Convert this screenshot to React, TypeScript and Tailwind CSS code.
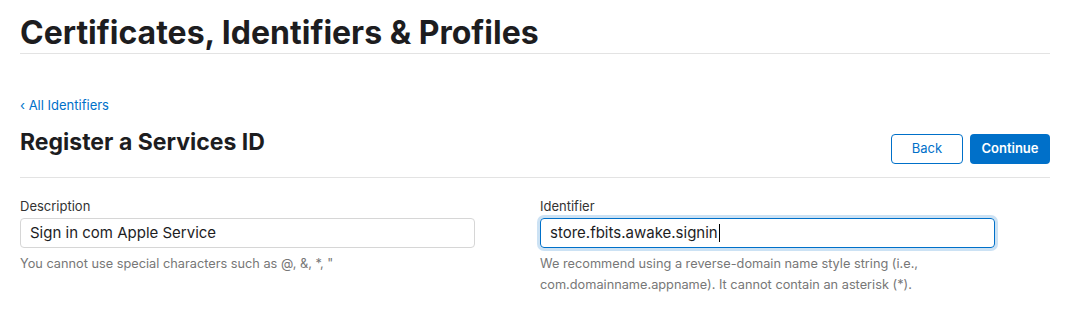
export default function App() {
  return (
    <div className="min-h-screen bg-white px-5 font-['Inter',sans-serif] text-[#1d1d1f]">
      <div className="w-[1030px]">
        <div className="pt-[14px] pb-[1px] border-b border-[#e3e3e3]">
          <h1 className="text-[32px] leading-[38px] font-bold">
            Certificates, Identifiers &amp; Profiles
          </h1>
        </div>

        <div className="pt-[38px]">
          <a href="#" className="text-[13px] leading-[18px] text-[#0070c9]">
            ‹ All Identifiers
          </a>
        </div>

        <div className="flex items-start justify-between pt-[12px] pb-[13px] border-b border-[#e3e3e3]">
          <h2 className="text-[23px] leading-[28px] font-bold">
            Register a Services ID
          </h2>
          <div className="flex gap-[7px] mt-[6px]">
            <button className="w-[72px] h-[30px] rounded-[4px] border border-[#0070c9] text-[13px] text-[#0070c9]">
              Back
            </button>
            <button className="w-[80px] h-[30px] rounded-[4px] bg-[#0070c9] text-[13px] font-semibold text-white">
              Continue
            </button>
          </div>
        </div>

        <div className="grid grid-cols-[455px_455px] gap-x-[65px] pt-[19px]">
          <div>
            <label className="block text-[13px] leading-[18px] text-[#333]">Description</label>
            <div className="mt-[3px] h-[30px] rounded-[4px] border border-[#d6d6d6] px-[9px] flex items-center text-[15px]">
              Sign in com Apple Service
            </div>
            <p className="mt-[5px] text-[12.75px] leading-[21px] text-[#777]">
              You cannot use special characters such as @, &amp;, *, "
            </p>
          </div>
          <div>
            <label className="block text-[13px] leading-[18px] text-[#333]">Identifier</label>
            <div className="mt-[3px] h-[30px] rounded-[4px] border border-[#0070c9] ring-[3px] ring-[#0070c9]/20 px-[9px] flex items-center text-[15px]">
              store.fbits.awake.signin
              <span className="ml-px inline-block w-px h-[18px] bg-black" />
            </div>
            <p className="mt-[5px] text-[12.75px] leading-[21px] text-[#777]">
              We recommend using a reverse-domain name style string (i.e.,
              <br />
              com.domainname.appname). It cannot contain an asterisk (*).
            </p>
          </div>
        </div>
      </div>
    </div>
  );
}
